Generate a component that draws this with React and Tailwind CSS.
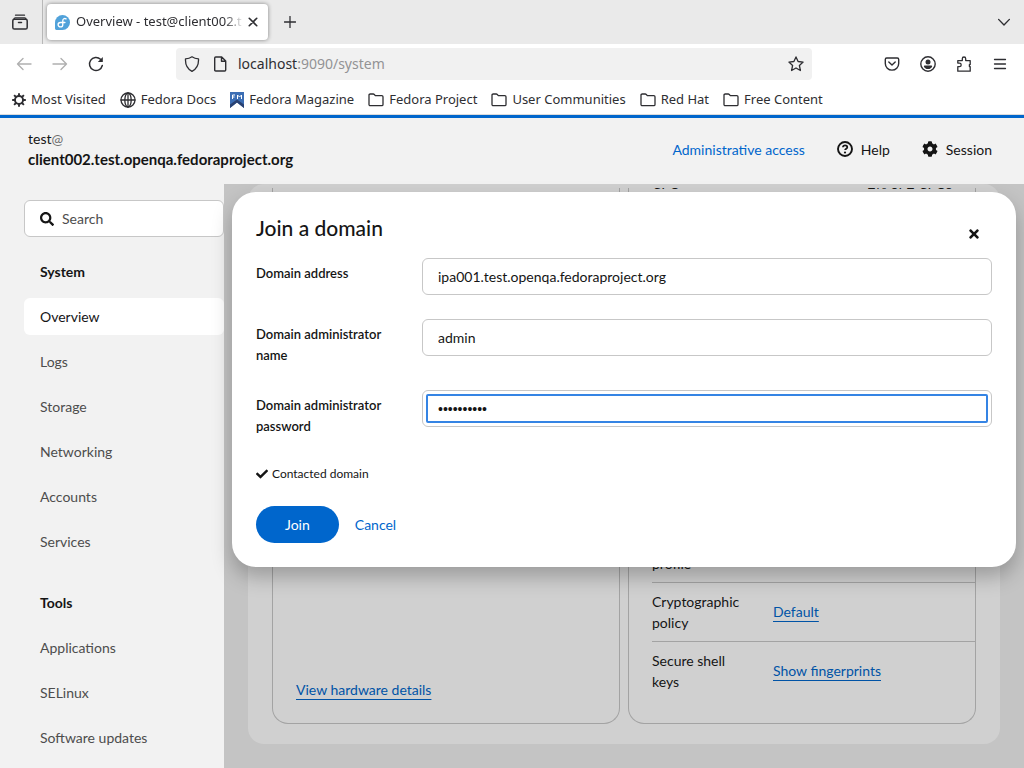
import React from "react";
import { FaSearch, FaTimes, FaCheck, FaCog } from "react-icons/fa";

function Svg({ size = "size-4", children }) {
  return (
    <svg
      viewBox="0 0 16 16"
      className={`${size} shrink-0`}
      fill="none"
      stroke="currentColor"
      strokeWidth="1.3"
      strokeLinecap="round"
      strokeLinejoin="round"
      aria-hidden="true"
    >
      {children}
    </svg>
  );
}

const ArchiveIcon = () => (
  <Svg>
    <path d="M3.500 1.200h9" />
    <path d="M2 5.200C2 4.300 2.600 3.800 3.400 3.800h9.200c.8 0 1.400.5 1.400 1.400" />
    <rect x="0.800" y="5.200" width="14.400" height="9.800" rx="1.600" strokeWidth="1.500" />
    <path d="M6.500 8.500h3" strokeWidth="1.500" />
  </Svg>
);
const FedoraIcon = () => (
  <svg viewBox="0 0 16 16" className="size-[15px] shrink-0" aria-hidden="true">
    <path d="M8 0a8 8 0 0 1 0 16H1.500A1.500 1.500 0 0 1 0 14.500V8a8 8 0 0 1 8-8z" fill="#51a2da" />
    <path d="M11.800 4.100C10 3.200 8.300 4.100 8.300 6v4c0 1.700-1.100 2.700-2.500 2.700S3.300 11.600 3.300 10.300 4.500 8 5.800 8h4.800" fill="none" stroke="#fff" strokeWidth="1.400" strokeLinecap="round" />
  </svg>
);
const GlobeIcon = () => (
  <Svg>
    <circle cx="8" cy="8" r="7" />
    <ellipse cx="8" cy="8" rx="3.200" ry="7" />
    <path d="M1 8h14M8 1v14" />
  </Svg>
);
const FolderIcon = () => (
  <Svg>
    <path d="M1 12.500V3.200C1 2.400 1.500 2 2.200 2h3c.5 0 .8.200 1.100.500l1 1.100h6.500c.7 0 1.200.500 1.200 1.200v7.700c0 .7-.5 1.200-1.200 1.200H2.200c-.7 0-1.200-.5-1.200-1.200z" />
  </Svg>
);
const MagazineIcon = () => (
  <svg viewBox="0 0 14 16" className="h-4 w-3.5 shrink-0" aria-hidden="true">
    <path d="M0 0h14v16l-7-5.500L0 16z" fill="#3c6eb4" />
    <path d="M0 12.500l7-5 7 5V16l-7-5.500L0 16z" fill="#294172" />
    <path d="M2.500 7V3h2.500M2.500 5h2M7.500 7V3l2 2 2-2v4" fill="none" stroke="#fff" strokeWidth="1" />
  </svg>
);
const BurstIcon = () => (
  <svg viewBox="0 0 16 16" className="size-3.5 shrink-0" fill="none" stroke="currentColor" aria-hidden="true">
    <circle cx="8" cy="8" r="4.600" strokeWidth="2.200" />
    <path d="M8 .2V4M8 12v3.800M.2 8H4M12 8h3.800M2.400 2.400l2.700 2.700M10.900 10.900l2.700 2.700M2.400 13.600l2.700-2.700M10.900 5.100l2.700-2.700" strokeWidth="2.200" />
  </svg>
);

const bookmarks = [
  ["Most Visited", BurstIcon],
  ["Fedora Docs", GlobeIcon],
  ["Fedora Magazine", MagazineIcon],
  ["Fedora Project", FolderIcon],
  ["User Communities", FolderIcon],
  ["Red Hat", FolderIcon],
  ["Free Content", FolderIcon],
];

function Browser() {
  return (
    <div className="shrink-0 font-['Noto_Sans',sans-serif] text-[#2e2e32]">
      <div className="flex h-11 items-center bg-[#eaeaea] text-[13px]">
        <button aria-label="Firefox View" className="flex h-full w-[43px] items-center justify-center border-r border-[#b8b8b8] pr-0.5">
          <ArchiveIcon />
        </button>
        <div className="ml-1 flex h-9 w-[221px] items-center gap-1.5 rounded bg-white pr-2.5 pl-2 shadow-[0_0_4px_rgba(0,0,0,0.45)]">
          <FedoraIcon />
          <span className="min-w-0 flex-1 overflow-hidden whitespace-nowrap mask-r-from-[148px] mask-r-to-[168px]">
            Overview - test@client002.t
          </span>
          <button aria-label="Close tab">
            <Svg size="size-2.5"><path d="M2 2l12 12M14 2L2 14" strokeWidth="2.600" /></Svg>
          </button>
        </div>
        <button aria-label="New tab" className="ml-4">
          <Svg size="size-3"><path d="M8 .5v15M.5 8h15" strokeWidth="1.700" /></Svg>
        </button>
        <button aria-label="List all tabs" className="mr-3.5 ml-auto">
          <Svg size="size-3"><path d="M.8 4.500L8 12l7.200-7.500" strokeWidth="1.800" /></Svg>
        </button>
      </div>
      <div className="flex h-10 items-center bg-white">
        <button aria-label="Back" className="ml-4 text-[#b0b0b0]">
          <Svg><path d="M15 8H1.500M7 2.500L1.500 8 7 13.500" strokeWidth="1.400" /></Svg>
        </button>
        <button aria-label="Forward" className="ml-5 text-[#b0b0b0]">
          <Svg><path d="M1 8h13.500M9 2.500L14.500 8 9 13.500" strokeWidth="1.400" /></Svg>
        </button>
        <button aria-label="Reload" className="ml-5">
          <Svg>
            <path d="M14.300 9.500A6.500 6.500 0 1 1 12.500 3.300" strokeWidth="1.500" />
            <path d="M14.800 1v5h-5z" fill="currentColor" stroke="none" />
          </Svg>
        </button>
        <div className="ml-[72px] flex h-8 max-w-[636px] min-w-0 flex-1 items-center rounded bg-[#f1f1f1] px-2">
          <Svg><path d="M8 .8c2 1.500 4 2 6.500 2 .3 5.500-1.700 10-6.500 12.500C3.200 12.800 1.200 8.300 1.500 2.800 4 2.800 6 2.300 8 .8z" strokeWidth="1.300" /></Svg>
          <span className="ml-3"><Svg><path d="M2.700 14V2c0-.6.4-1 1-1h6l4 4v9c0 .6-.4 1-1 1h-9c-.6 0-1-.4-1-1zM9.500 1.200V5.300h4" strokeWidth="1.400" /></Svg></span>
          <span className="ml-2.5 flex-1 truncate text-sm">
            localhost<span className="text-[#939395]">:9090/system</span>
          </span>
          <button aria-label="Bookmark this page">
            <Svg><path d="M8 .9l2.100 4.600 5 .6-3.700 3.400 1 5L8 12l-4.400 2.500 1-5L.9 6.100l5-.6z" strokeWidth="1.300" /></Svg>
          </button>
        </div>
        <div className="mr-4 ml-auto flex items-center gap-5">
          <button aria-label="Pocket">
            <Svg><path d="M2.700 2h10.600c.8 0 1.400.6 1.400 1.400v4A6.700 6.700 0 0 1 1.300 7.400v-4C1.300 2.600 1.900 2 2.700 2zM4.800 6L8 9l3.200-3" strokeWidth="1.400" /></Svg>
          </button>
          <button aria-label="Account">
            <Svg>
              <circle cx="8" cy="8" r="7.200" strokeWidth="1.400" />
              <circle cx="8" cy="6" r="2.500" fill="currentColor" stroke="none" />
              <path d="M3.800 10.200c0-.5.4-.7.800-.7h6.800c.4 0 .8.200.8.700-.5 1.900-2.200 2.800-4.200 2.800s-3.700-.9-4.200-2.800z" fill="currentColor" stroke="none" />
            </Svg>
          </button>
          <button aria-label="Extensions">
            <Svg><path d="M1.800 15.200v-4.500h1.600a1.800 1.800 0 0 0 0-3.600H1.800V4.600h4.500V2.700a1.700 1.700 0 0 1 3.400 0v1.900h4.500v4h-.8v2h.8v4.600z" strokeWidth="1.300" /></Svg>
          </button>
          <button aria-label="Menu">
            <Svg><path d="M2.500 3.500h11M2.500 8h11M2.500 12.500h11" strokeWidth="1.300" /></Svg>
          </button>
        </div>
      </div>
      <div className="flex h-[31px] items-center gap-3.5 border-b border-[#dcdcdc] bg-white px-3 pt-0.5 text-[13px]">
        {bookmarks.map(([name, Icon]) => (
          <a key={name} href="#" className="flex items-center gap-[5px] whitespace-nowrap">
            <Icon />
            {name}
          </a>
        ))}
      </div>
    </div>
  );
}

function NavGroup({ title, items, active }) {
  return (
    <section>
      <h2 className="px-4 py-2 font-bold text-[#151515]">{title}</h2>
      <ul className="mt-2 flex flex-col gap-2">
        {items.map((item) => (
          <li key={item}>
            <a
              href="#"
              className={
                item === active
                  ? "block rounded-md bg-white px-4 py-2 text-[#151515]"
                  : "block rounded-md px-4 py-2 text-[#4d4d4d]"
              }
            >
              {item}
            </a>
          </li>
        ))}
      </ul>
    </section>
  );
}

function Field({ id, label, children }) {
  return (
    <div className="grid grid-cols-[150px_1fr] items-start gap-4">
      <label htmlFor={id} className="pt-[5px] text-[13px] leading-[21px] font-semibold">
        {label}
      </label>
      {children}
    </div>
  );
}

const inputClass = "h-[37px] w-full rounded-md border border-[#c7c7c7] bg-white px-[15px] outline-none";

function JoinDialog() {
  return (
    <div
      role="dialog"
      aria-labelledby="join-title"
      className="absolute inset-x-2 top-2 rounded-3xl bg-white p-6 text-[#151515] shadow-[0_10px_20px_rgba(0,0,0,0.25)]"
    >
      <div className="flex h-[42px] items-start justify-between">
        <h1 id="join-title" className="text-[21px] leading-6 font-medium">Join a domain</h1>
        <button aria-label="Close" className="p-[11px]">
          <FaTimes className="size-3.5" />
        </button>
      </div>
      <form className="flex flex-col gap-6">
        <Field id="address" label="Domain address">
          <input id="address" className={inputClass} defaultValue="ipa001.test.openqa.fedoraproject.org" />
        </Field>
        <Field id="admin" label="Domain administrator name">
          <input id="admin" className={inputClass} defaultValue="admin" />
        </Field>
        <Field id="password" label="Domain administrator password">
          <div className="flex h-[37px] rounded-md border border-[#c7c7c7] p-[3px]">
            <input
              id="password"
              type="password"
              defaultValue="correcthor"
              className="w-full rounded-xs border-2 border-[#3584e4] bg-white px-2.5 font-['Liberation_Sans',sans-serif] text-sm outline-none"
            />
          </div>
        </Field>
        <p className="flex items-center gap-1 py-0.5 text-xs leading-[21px]">
          <FaCheck className="size-3" />
          Contacted domain
        </p>
        <div className="-mt-1 flex items-center">
          <button type="button" className="h-[37px] rounded-full bg-[#0066cc] px-[29px] text-white">Join</button>
          <button type="button" className="px-4 text-[#0066cc]">Cancel</button>
        </div>
      </form>
    </div>
  );
}

function Row({ name, children }) {
  return (
    <tr className="border-t border-[#a3a3a3]">
      <th scope="row" className="w-[121px] py-2 pr-6 text-left font-normal">{name}</th>
      <td className="pt-[7px] pb-[9px]">{children}</td>
    </tr>
  );
}

const linkClass = "text-[#0053a6] underline underline-offset-4";

function Overview() {
  return (
    <div className="h-full px-6">
      <div className="h-[560px] rounded-2xl bg-[#d0d0d0] px-6 pt-1 pb-5">
        <div className="grid h-full grid-cols-2 gap-2 text-[#151515]">
          <section className="flex flex-col justify-end rounded-b-2xl border border-t-0 border-[#a3a3a3] px-[23px] pb-[23px]">
            <a href="#" className={`${linkClass} self-start`}>View hardware details</a>
          </section>
          <section className="flex flex-col justify-between rounded-b-2xl border border-t-0 border-[#a3a3a3] pb-[23px] pl-[23px]">
            <div className="flex h-[3px] items-end justify-between overflow-hidden pr-[23px] leading-[14px]">
              <span>CPU</span>
              <span>2% of 2 CPUs</span>
            </div>
            <table className="w-full table-fixed border-collapse">
              <tbody>
                <Row name="Performance profile" />
                <Row name="Cryptographic policy">
                  <a href="#" className={linkClass}>Default</a>
                </Row>
                <Row name="Secure shell keys">
                  <a href="#" className={linkClass}>Show fingerprints</a>
                </Row>
              </tbody>
            </table>
          </section>
        </div>
      </div>
    </div>
  );
}

export default function App() {
  return (
    <div className="flex h-screen flex-col overflow-hidden bg-[#f2f2f2]">
      <Browser />
      <div className="flex min-h-0 flex-1 flex-col border-t-[3px] border-[#0066cc] font-[Lato,sans-serif] text-sm leading-[21px]">
        <header className="flex h-[66px] shrink-0 items-center justify-between pr-8 pb-1 pl-7 text-[#151515]">
          <div>
            <div>test<span className="text-[#707070]">@</span></div>
            <div className="text-[15px] font-bold">client002.test.openqa.fedoraproject.org</div>
          </div>
          <div className="flex items-center gap-8">
            <button className="text-[#0066cc]">Administrative access</button>
            <button className="flex items-center gap-2">
              <Svg>
                <circle cx="8" cy="8" r="7" strokeWidth="1.900" />
                <path d="M5.900 6.300c.1-1.200 1-1.900 2.200-1.900s2.200.8 2.200 1.800c0 1.500-2.200 1.500-2.200 2.900" strokeWidth="1.700" strokeLinecap="butt" />
                <circle cx="8" cy="11.500" r="1.100" fill="currentColor" stroke="none" />
              </Svg>
              Help
            </button>
            <button className="flex items-center gap-2">
              <FaCog className="size-4" />
              Session
            </button>
          </div>
        </header>
        <div className="flex min-h-0 flex-1">
          <nav className="w-56 shrink-0 overflow-hidden pt-4 pl-6">
            <label className="flex h-[37px] items-center gap-2 rounded-md border border-[#c7c7c7] bg-white px-[15px]">
              <FaSearch className="size-3.5 shrink-0 text-[#151515]" />
              <input aria-label="Search" placeholder="Search" className="w-full min-w-0 outline-none placeholder:text-[#4d4d4d]" />
            </label>
            <div className="mt-4 flex flex-col gap-6">
              <NavGroup title="System" active="Overview" items={["Overview", "Logs", "Storage", "Networking", "Accounts", "Services"]} />
              <NavGroup title="Tools" items={["Applications", "SELinux", "Software updates"]} />
            </div>
          </nav>
          <main className="relative min-w-0 flex-1 bg-[#c4c4c4]">
            <Overview />
            <JoinDialog />
          </main>
        </div>
      </div>
    </div>
  );
}
